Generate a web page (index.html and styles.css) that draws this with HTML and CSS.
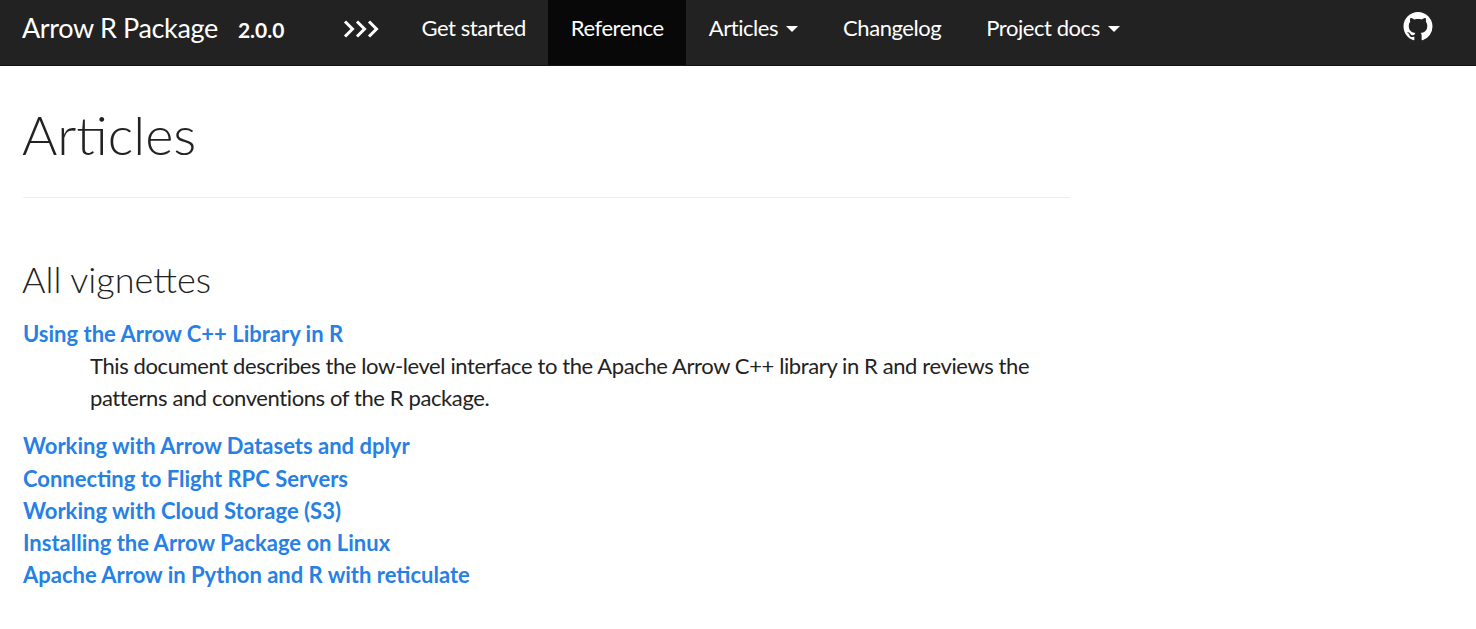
FILE: index.html
```html
<!DOCTYPE html>
<html lang="en">
<head>
<meta charset="utf-8">
<title>Articles</title>
<link rel="stylesheet" href="styles.css">
</head>
<body>
<nav class="navbar">
  <div class="brand"><a class="brand-name" href="#">Arrow R Package</a><span class="version">2.0.0</span></div>
  <ul class="nav">
    <li><a class="nav-link logo-link" href="#"><svg class="chevrons" width="36" height="18" viewBox="0 0 36 18"><path d="M2 1.5 9.5 9 2 16.5M14 1.5 21.5 9 14 16.5M26 1.5 33.5 9 26 16.5" fill="none" stroke="#fff" stroke-width="3"/></svg></a></li>
    <li><a class="nav-link" href="#">Get started</a></li>
    <li><a class="nav-link active" href="#">Reference</a></li>
    <li><a class="nav-link" href="#">Articles<span class="caret"></span></a></li>
    <li><a class="nav-link" href="#">Changelog</a></li>
    <li><a class="nav-link" href="#">Project docs<span class="caret"></span></a></li>
  </ul>
  <a class="github" href="#" aria-label="GitHub"><svg width="30" height="29" viewBox="0 0 16 16"><path fill="#fff" d="M8 0C3.58 0 0 3.58 0 8c0 3.54 2.29 6.53 5.47 7.59.4.07.55-.17.55-.38 0-.19-.01-.82-.01-1.49-2.01.37-2.53-.49-2.69-.94-.09-.23-.48-.94-.82-1.13-.28-.15-.68-.52-.01-.53.63-.01 1.08.58 1.23.82.72 1.21 1.87.87 2.33.66.07-.52.28-.87.51-1.07-1.78-.2-3.64-.89-3.64-3.95 0-.87.31-1.59.82-2.15-.08-.2-.36-1.02.08-2.12 0 0 .67-.21 2.2.82.64-.18 1.32-.27 2-.27s1.36.09 2 .27c1.53-1.04 2.2-.82 2.2-.82.44 1.1.16 1.92.08 2.12.51.56.82 1.27.82 2.15 0 3.07-1.87 3.75-3.65 3.95.29.25.54.73.54 1.48 0 1.07-.01 1.93-.01 2.2 0 .21.15.46.55.38A8.01 8.01 0 0 0 16 8c0-4.42-3.58-8-8-8z"/></svg></a>
</nav>
<main class="content">
  <header class="page-header"><h1>Articles</h1></header>
  <section class="vignettes">
    <h3>All vignettes</h3>
    <dl>
      <dt><a href="#">Using the Arrow C++ Library in R</a></dt>
      <dd>This document describes the low-level interface to the Apache Arrow C++ library in R and reviews the patterns and conventions of the R package.</dd>
      <dt><a href="#">Working with Arrow Datasets and dplyr</a></dt>
      <dt><a href="#">Connecting to Flight RPC Servers</a></dt>
      <dt><a href="#">Working with Cloud Storage (S3)</a></dt>
      <dt><a href="#">Installing the Arrow Package on Linux</a></dt>
      <dt><a href="#">Apache Arrow in Python and R with reticulate</a></dt>
    </dl>
  </section>
</main>
</body>
</html>
```
FILE: styles.css
```css
* { box-sizing: border-box; }
html, body { margin: 0; padding: 0; }
body {
  font-family: "Source Sans Pro", Lato, "Noto Sans", sans-serif;
  font-size: 22px;
  line-height: 32.25px;
  color: #222;
  background: #fff;
  overflow: hidden;
}
a { text-decoration: none; }
.navbar {
  display: flex;
  align-items: stretch;
  height: 66px;
  background: #222;
  border-bottom: 1px solid #121212;
  padding-left: 23px;
  color: #fff;
}
.brand { display: flex; align-items: center; width: 298px; flex: none; padding-bottom: 8px; }
.brand-name { color: #fff; font-size: 27px; letter-spacing: -0.35px; margin-left: -1px; }
.version { font-size: 21px; font-weight: 700; margin-left: 20px; margin-top: 3px; }
.nav { display: flex; list-style: none; margin: 0; padding: 0; flex: 1; }
.nav-link {
  display: flex;
  align-items: center;
  gap: 8px;
  height: 65px;
  padding: 0 22.5px 8px;
  color: #fff;
  white-space: pre;
  letter-spacing: -0.44px;
}
.logo-link { padding: 0 20px 8px 22px; }
.active { background: #080808; }
.caret { width: 0; height: 0; border-top: 6px solid #fff; border-left: 6px solid transparent; border-right: 6px solid transparent; }
.github { display: flex; align-items: center; margin-right: 43px; padding-bottom: 12px; }
.content { width: 1093px; padding: 0 23px; }
.page-header { height: 132px; border-bottom: 1px solid #eee; padding-top: 36px; }
h1 { margin: 0 0 0 -1px; font-size: 54px; font-weight: 300; line-height: 66px; color: #222; }
h3 { margin: 58px 0 0 -1px; font-size: 36px; font-weight: 300; line-height: 46px; }
dl { margin: 16px 0 0; }
dt { font-weight: 700; }
dt a { color: #2780e3; }
dd { margin: 0 0 16px 67px; letter-spacing: -0.39px; line-height: 32px; }
```
